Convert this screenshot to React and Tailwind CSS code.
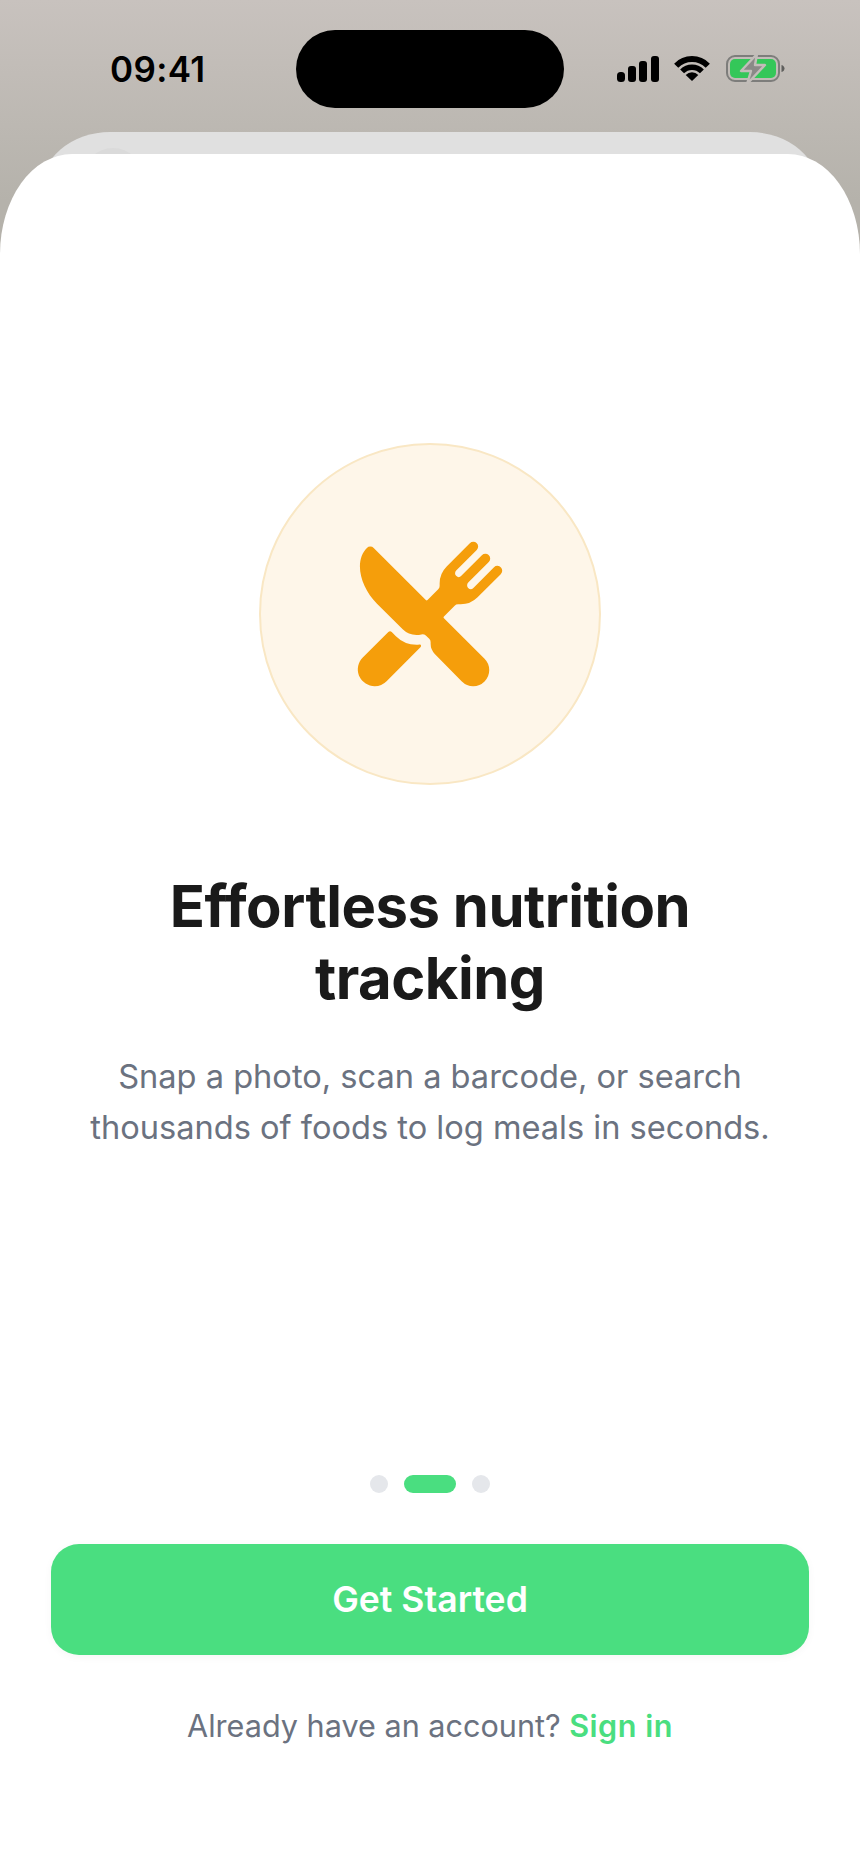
import { IoRestaurant } from 'react-icons/io5'

function StatusIcons() {
  return (
    <div className="flex items-center">
      {/* signal */}
      <svg width="42" height="26" viewBox="0 0 42 26" fill="#000">
        <rect x="0" y="16" width="8" height="10" rx="3.5" />
        <rect x="11" y="10" width="8" height="16" rx="3" />
        <rect x="22" y="5" width="8" height="21" rx="3" />
        <rect x="34" y="0" width="8" height="26" rx="3" />
      </svg>
      {/* wifi */}
      <svg className="ml-[15px]" width="36" height="26" viewBox="0 0 36 26" fill="none" stroke="#000">
        <path d="M2.2 9.7A22 22 0 0 1 33.8 9.7" strokeWidth="5.8" />
        <path d="M8.1 15.4A13.75 13.75 0 0 1 27.9 15.4" strokeWidth="5.4" />
        <path d="M18 25L11.7 18.9A8.8 8.8 0 0 1 24.3 18.9Z" fill="#000" stroke="none" />
      </svg>
      {/* battery */}
      <svg className="ml-[16px]" width="60" height="30" viewBox="0 0 60 30" fill="none">
        <rect x="1" y="2" width="52" height="25" rx="8" stroke="#7d7d7b" strokeWidth="2" />
        <rect x="4" y="5" width="46" height="19" rx="5" fill="#34c759" />
        <path d="M55.5 11c2 .6 3 2 3 3.5s-1 3-3 3.5z" fill="#5f5f5d" />
        <path d="M31 0L15 17H25L21 30L39 11H29Z" fill="#8a8987" stroke="#c2bdb9" strokeWidth="2.4" strokeLinejoin="round" />
      </svg>
    </div>
  )
}

export default function App() {
  return (
    <div
      className="flex h-[1869px] w-[860px] flex-col overflow-hidden bg-gradient-to-b from-[#c8c2be] to-[#b5b2ab] to-[200px]"
      style={{ fontFamily: 'Inter, sans-serif' }}
    >
      <div className="mt-[30px] flex h-[78px] shrink-0 items-center pl-[110px]">
        <span className="w-[186px] text-[35px] leading-none font-semibold tracking-[0.01em] text-black">09:41</span>
        <div className="h-[78px] w-[268px] rounded-full bg-black" />
        <div className="ml-[53px] mt-[-1px]">
          <StatusIcons />
        </div>
      </div>

      {/* card behind the sheet */}
      <div className="mx-[40px] mt-[24px] h-[100px] shrink-0 rounded-t-[70px_60px] bg-[#e0e0e0] pt-[16px] pl-[43px]">
        <div className="size-[60px] rounded-full bg-[#dadada]" />
      </div>

      <main className="relative mt-[-78px] flex flex-1 flex-col items-center rounded-t-[72px_100px] bg-white">
        <div className="mt-[289px] flex size-[342px] items-center justify-center rounded-full border-2 border-[#f9e7c4] bg-[#fef6e9]">
          <IoRestaurant size={154} color="#f59e0b" />
        </div>

        <h1 className="mt-[85px] text-center text-[58px] leading-[72px] font-bold tracking-[-0.5px] text-[#1a1a1a] [font-variant-ligatures:none]">
          Effortless nutrition
          <br />
          tracking
        </h1>

        <p className="mt-[37px] text-center text-[32.6px] leading-[51px] text-[#6b7280]">
          Snap a photo, scan a barcode, or search
          <br />
          thousands of foods to log meals in seconds.
        </p>

        <div className="mt-[322px] flex items-center gap-4">
          <span className="size-[18px] rounded-full bg-[#e5e7eb]" />
          <span className="h-[18px] w-[52px] rounded-full bg-[#4ade80]" />
          <span className="size-[18px] rounded-full bg-[#e5e7eb]" />
        </div>

        <button
          type="button"
          className="mt-[51px] h-[111px] w-[758px] rounded-[28px] bg-[#4ade80] text-[35.6px] font-semibold text-white shadow-[0_2px_8px_rgba(0,0,0,0.04)]"
        >
          Get Started
        </button>

        <p className="mt-[53px] text-[30.6px] leading-[36px] text-[#6b7280]">
          Already have an account? <span className="font-semibold tracking-[0.5px] text-[#4ade80]">Sign in</span>
        </p>
      </main>
    </div>
  )
}
